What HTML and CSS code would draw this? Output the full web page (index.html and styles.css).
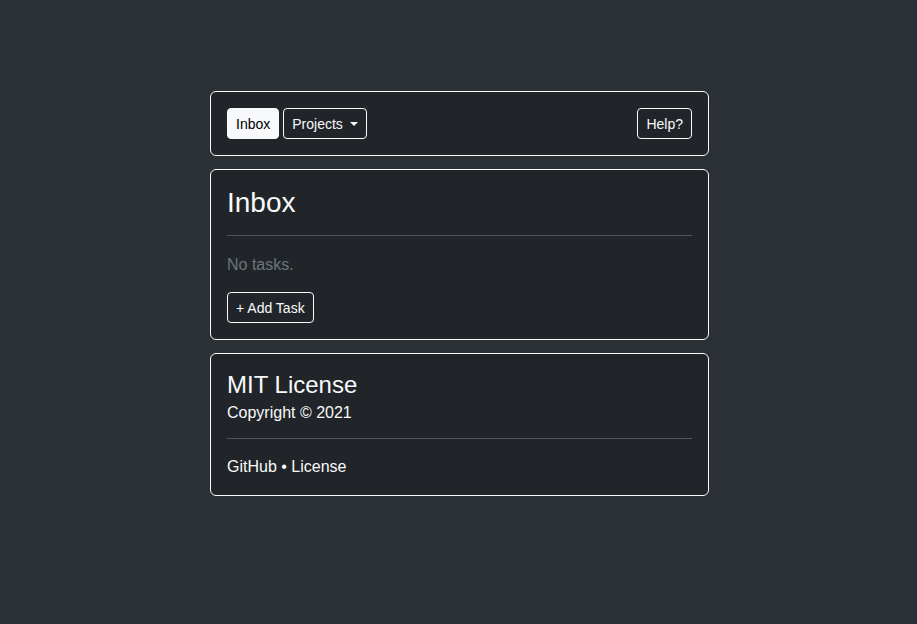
FILE: index.html
```html
<!DOCTYPE html>
<html lang="en">
<head>
<meta charset="utf-8">
<title>Inbox</title>
<link rel="stylesheet" href="styles.css">
</head>
<body>
<main class="page">
  <nav class="card nav-card">
    <div class="nav-left">
      <button class="btn btn-light">Inbox</button>
      <button class="btn btn-outline">Projects<span class="caret"></span></button>
    </div>
    <button class="btn btn-outline">Help?</button>
  </nav>
  <section class="card">
    <h3 class="title">Inbox</h3>
    <hr class="rule">
    <p class="muted">No tasks.</p>
    <button class="btn btn-outline">+ Add Task</button>
  </section>
  <footer class="card">
    <h4 class="subtitle">MIT License</h4>
    <p class="text">Copyright © 2021</p>
    <hr class="rule rule-tight">
    <p class="text"><a class="link" href="#">GitHub</a> • <a class="link" href="#">License</a></p>
  </footer>
</main>
</body>
</html>
```

FILE: styles.css
```css
* { box-sizing: border-box; }
html, body { margin: 0; padding: 0; }
body {
  background: #2b3035;
  color: #dee2e6;
  font-family: "Liberation Sans", Arial, sans-serif;
  font-size: 16px;
  line-height: 1.5;
  min-height: 624px;
}
.page {
  width: 499px;
  margin: 0 auto;
  padding-top: 91px;
  display: flex;
  flex-direction: column;
  gap: 13px;
  position: relative;
  left: 1px;
}
.card {
  background: #212529;
  border: 1px solid #f8f9fa;
  border-radius: 6px;
  padding: 16px;
}
.nav-card {
  display: flex;
  justify-content: space-between;
  align-items: center;
}
.nav-left { display: flex; gap: 4px; }
.btn {
  font-family: inherit;
  font-size: 14px;
  line-height: 21px;
  padding: 5px 8px 3px;
  border-radius: 4px;
  border: 1px solid #f8f9fa;
  cursor: pointer;
}
.btn-light { background: #f8f9fa; color: #000; }
.btn-outline { background: transparent; color: #f8f9fa; }
.caret {
  display: inline-block;
  margin-left: 7px;
  vertical-align: 3px;
  border-top: 4.5px solid #f8f9fa;
  border-left: 4px solid transparent;
  border-right: 4px solid transparent;
}
.title {
  margin: 0;
  font-size: 28px;
  font-weight: 500;
  line-height: 33px;
  color: #f8f9fa;
}
.subtitle {
  margin: 0;
  padding-bottom: 2px;
  font-size: 24px;
  font-weight: 500;
  line-height: 29px;
  color: #f8f9fa;
}
.rule {
  margin: 16px 0;
  border: 0;
  border-top: 1px solid #50555a;
}
.rule-tight { margin-top: 13px; }
.muted { margin: 0 0 15px; padding-top: 1px; color: #6c757d; }
.text { margin: 0; color: #f8f9fa; }
.link { color: #f8f9fa; text-decoration: none; }
```
